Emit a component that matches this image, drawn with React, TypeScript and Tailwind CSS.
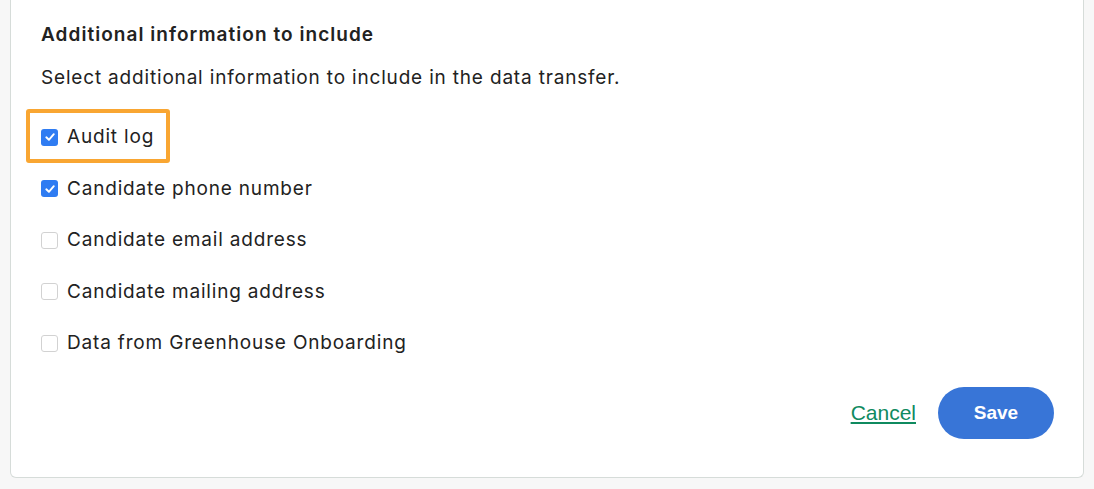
import React from "react";

const items = [
  { label: "Audit log", checked: true, highlight: true },
  { label: "Candidate phone number", checked: true },
  { label: "Candidate email address", checked: false },
  { label: "Candidate mailing address", checked: false },
  { label: "Data from Greenhouse Onboarding", checked: false },
];

function Box({ checked }: { checked: boolean }) {
  if (checked) {
    return (
      <span className="flex h-[17px] w-[17px] shrink-0 items-center justify-center rounded-[3px] bg-[#2f7cf2]">
        <svg width="12" height="12" viewBox="0 0 12 12" fill="none">
          <path d="M2.3 6.3 L4.9 8.8 L9.8 3.2" stroke="white" strokeWidth="1.9" strokeLinecap="round" strokeLinejoin="round" />
        </svg>
      </span>
    );
  }
  return <span className="h-[17px] w-[17px] shrink-0 rounded-[3px] border border-[#d2d2d2] bg-white" />;
}

export default function App() {
  return (
    <div className="min-h-[489px] bg-[#f7f7f7] px-[10px] pb-[11px]" style={{ fontFamily: "Inter, 'Noto Sans', sans-serif" }}>
      <div className="rounded-b-[6px] border border-t-0 border-[#d6dcd9] bg-white pl-[30px] pr-[29px] pt-[23px] pb-[38px] text-[#222]">
        <h2 className="text-[19px] font-semibold leading-[24px] tracking-[1.05px]">Additional information to include</h2>
        <p className="mt-[19px] text-[19px] leading-[24px] tracking-[0.82px]">Select additional information to include in the data transfer.</p>
        <div className="mt-[35px] flex flex-col gap-[27.5px]">
          {items.map((it) => (
            <div key={it.label} className="relative flex h-[24px] items-center">
              {it.highlight && (
                <span className="pointer-events-none absolute left-[-15px] top-[-16px] h-[54px] w-[144px] rounded-[3px] border-[4px] border-[#f9a632]" />
              )}
              <Box checked={it.checked} />
              <span className="ml-[9px] text-[19px] leading-[24px] tracking-[0.82px]">{it.label}</span>
            </div>
          ))}
        </div>
        <div className="mt-[32px] flex items-center justify-end gap-[22px]">
          <a className="text-[21px] text-[#0f8a5f] underline underline-offset-[2px]" style={{ fontFamily: "'Liberation Sans', Arial, sans-serif" }}>Cancel</a>
          <button className="h-[52px] w-[116px] rounded-full bg-[#3875d7] text-[19px] font-bold text-white" style={{ fontFamily: "'Liberation Sans', Arial, sans-serif" }}>Save</button>
        </div>
      </div>
    </div>
  );
}
